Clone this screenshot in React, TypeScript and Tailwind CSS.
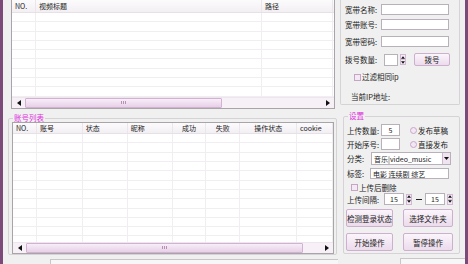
import React from 'react';

const font = { fontFamily: '"Noto Sans CJK SC", "Liberation Sans", sans-serif' };

function Arrow({ dir }: { dir: 'left' | 'right' | 'up' | 'down' }) {
  const pts = {
    left: '4,0 4,6 0,3',
    right: '0,0 0,6 4,3',
    up: '0,3 5,3 2.5,0',
    down: '0,0 5,0 2.5,3',
  }[dir];
  const w = dir === 'left' || dir === 'right' ? 4 : 5;
  const h = dir === 'left' || dir === 'right' ? 6 : 3;
  return (
    <svg width={w} height={h} viewBox={`0 0 ${w} ${h}`} className="block">
      <polygon points={pts} fill="#111" />
    </svg>
  );
}

function HScroll({ thumb }: { thumb: number }) {
  return (
    <div className="h-[11px] flex items-center bg-[#f7f1f7] border-t border-[#ede6ed]">
      <div className="w-[13px] flex justify-center"><Arrow dir="left" /></div>
      <div
        className="h-[10px] rounded-[1px] border border-[#d2b2d2] bg-gradient-to-b from-[#f8eef8] to-[#e7d0e7] flex items-center justify-center"
        style={{ width: thumb }}
      >
        <div className="flex gap-[1px]">
          <div className="w-[1px] h-[3px] bg-[#b890b8]" />
          <div className="w-[1px] h-[3px] bg-[#b890b8]" />
          <div className="w-[1px] h-[3px] bg-[#b890b8]" />
        </div>
      </div>
      <div className="flex-1" />
      <div className="w-[12px] flex justify-center"><Arrow dir="right" /></div>
    </div>
  );
}

type Col = { title: string; w: number; align?: 'left' | 'center' };

function Grid({ cols, headH, rows }: { cols: Col[]; headH: number; rows: number }) {
  return (
    <div className="flex-1 flex flex-col overflow-hidden">
      <div className="flex bg-gradient-to-b from-[#fcfbfc] to-[#f3eff3] border-b border-[#e6e1e6]" style={{ height: headH }}>
        {cols.map((c, i) => (
          <div
            key={i}
            className={`flex items-center text-[7px] text-[#222] border-r border-[#ebe6eb] ${c.align === 'center' ? 'justify-center' : 'pl-[3px]'}`}
            style={{ width: c.w }}
          >
            {c.title}
          </div>
        ))}
        <div className="flex-1" />
      </div>
      {Array.from({ length: rows }).map((_, r) => (
        <div key={r} className="flex h-[9.3px] border-b border-[#f1eef1] shrink-0">
          {cols.map((c, i) => (
            <div key={i} className="border-r border-[#f1eef1]" style={{ width: c.w }} />
          ))}
        </div>
      ))}
    </div>
  );
}

function Input({ w, h = 11, text, center }: { w: number; h?: number; text?: string; center?: boolean }) {
  return (
    <div
      className={`bg-white border border-[#b9b1b9] flex items-center text-[7px] text-[#222] ${center ? 'justify-center' : 'pl-[2px]'}`}
      style={{ width: w, height: h }}
    >
      {text}
    </div>
  );
}

function Spinner() {
  return (
    <div className="w-[6px] h-[11px] flex flex-col border border-[#d0b8d0] bg-[#f4e9f4]">
      <div className="flex-1 flex items-center justify-center border-b border-[#d9c6d9]"><Arrow dir="up" /></div>
      <div className="flex-1 flex items-center justify-center"><Arrow dir="down" /></div>
    </div>
  );
}

function Btn({ w, h, label }: { w: number; h: number; label: string }) {
  return (
    <div
      className="rounded-[2px] border border-[#cdb0cd] bg-gradient-to-b from-[#fbf5fb] to-[#ecdbec] flex items-center justify-center text-[7.5px] text-[#222]"
      style={{ width: w, height: h }}
    >
      {label}
    </div>
  );
}

function Check({ label }: { label: string }) {
  return (
    <div className="flex items-center gap-[1px] text-[7.5px] text-[#222]">
      <div className="w-[7px] h-[7px] border border-[#c4a6c4] bg-[#f4e8f4]" />
      <span>{label}</span>
    </div>
  );
}

function Radio({ label }: { label: string }) {
  return (
    <div className="flex items-center gap-[1px] text-[7.5px] text-[#222]">
      <div className="w-[7px] h-[7px] rounded-full border border-[#c9a6c9] bg-[#f3e7f3]" />
      <span>{label}</span>
    </div>
  );
}

const topCols: Col[] = [
  { title: 'NO.', w: 24 },
  { title: '视频标题', w: 226 },
  { title: '路径', w: 71 },
];

const accCols: Col[] = [
  { title: 'NO.', w: 24 },
  { title: '账号', w: 46 },
  { title: '状态', w: 45 },
  { title: '昵称', w: 45 },
  { title: '成功', w: 34, align: 'center' },
  { title: '失败', w: 34, align: 'center' },
  { title: '操作状态', w: 57, align: 'center' },
  { title: 'cookie', w: 36 },
];

export default function App() {
  return (
    <div className="w-[468px] h-[264px] flex bg-[#f0f0f0] overflow-hidden text-[#222]" style={font}>
      <div className="w-[3px] bg-[#7b4a79]" />

      {/* left column */}
      <div className="w-[335px] flex flex-col">
        <div className="ml-[8px] w-[324px] h-[109px] bg-white border-x border-b border-[#a8a4a8] flex flex-col">
          <Grid cols={topCols} headH={13} rows={9} />
          <HScroll thumb={197} />
        </div>

        <div className="relative ml-[5px] mt-[9px] w-[329px] h-[140px] border border-[#d6d3d6] rounded-[2px]">
          <span className="absolute left-[4px] top-[-6px] px-[1px] bg-[#f0f0f0] text-[7.5px] leading-[9px] text-[#dc2fdc]">账号列表</span>
          <div className="ml-[3px] mt-[3px] w-[322px] h-[132px] bg-white border border-[#a8a4a8] flex flex-col">
            <Grid cols={accCols} headH={14} rows={12} />
            <HScroll thumb={277} />
          </div>
        </div>

        <div className="ml-[47px] mt-[4px] h-[6px] border-t border-l border-[#c9c6c9] bg-[#f7f7f7]" />
      </div>

      {/* right column */}
      <div className="w-[127px] flex flex-col">
        <div className="ml-[2px] w-[120px] h-[107px] border-x border-b border-[#d6d3d6] rounded-b-[2px] flex flex-col text-[7.5px]">
          <div className="flex items-center mt-[4px] h-[11px] pl-[4px]">
            <span className="w-[36px]">宽带名称:</span>
            <Input w={68} />
          </div>
          <div className="flex items-center mt-[4px] h-[11px] pl-[4px]">
            <span className="w-[36px]">宽带账号:</span>
            <Input w={68} />
          </div>
          <div className="flex items-center mt-[6px] h-[11px] pl-[4px]">
            <span className="w-[36px]">宽带密码:</span>
            <Input w={68} />
          </div>
          <div className="flex items-center mt-[6px] h-[13px] pl-[4px]">
            <span className="w-[39px]">拨号数量:</span>
            <Input w={14} h={12} />
            <div className="ml-[2px]"><Spinner /></div>
            <div className="ml-[8px]"><Btn w={36} h={13} label="拨号" /></div>
          </div>
          <div className="flex items-center mt-[7px] h-[8px] pl-[13px]">
            <Check label="过滤相同ip" />
          </div>
          <div className="flex items-center mt-[11px] h-[9px] pl-[10px]">
            <span>当前IP地址:</span>
          </div>
        </div>

        <div className="relative ml-[5px] mt-[11px] w-[117px] h-[140px] border border-[#d6d3d6] rounded-[2px] flex flex-col text-[7.5px]">
          <span className="absolute left-[4px] top-[-6px] px-[1px] bg-[#f0f0f0] leading-[9px] text-[#dc2fdc]">设置</span>
          <div className="flex items-center mt-[7px] h-[12px] pl-[3px]">
            <span className="w-[34px]">上传数量:</span>
            <Input w={19} h={12} text="5" center />
            <div className="ml-[10px]"><Radio label="发布草稿" /></div>
          </div>
          <div className="flex items-center mt-[2px] h-[12px] pl-[3px]">
            <span className="w-[34px]">开始序号:</span>
            <Input w={19} h={12} />
            <div className="ml-[10px]"><Radio label="直接发布" /></div>
          </div>
          <div className="flex items-center mt-[2px] h-[13px] pl-[3px]">
            <span className="w-[24px]">分类:</span>
            <div className="w-[80px] h-[13px] bg-white border border-[#b9b1b9] flex items-center text-[7px]">
              <span className="flex-1 pl-[2px]">音乐|video_music</span>
              <div className="w-[8px] h-full border-l border-[#d0b8d0] bg-[#f1e4f1] flex items-center justify-center">
                <Arrow dir="down" />
              </div>
            </div>
          </div>
          <div className="flex items-center mt-[3px] h-[11px] pl-[3px]">
            <span className="w-[23px]">标签:</span>
            <Input w={79} text="电影 连续剧 综艺" />
          </div>
          <div className="flex items-center mt-[4px] h-[8px] pl-[7px]">
            <Check label="上传后删除" />
          </div>
          <div className="flex items-center mt-[2px] h-[12px] pl-[3px]">
            <span className="w-[37px]">上传间隔:</span>
            <Input w={20} h={12} text="15" center />
            <div className="ml-[2px]"><Spinner /></div>
            <span className="ml-[4px] w-[6px] h-[1px] bg-[#222]" />
            <div className="ml-[3px]"><Input w={20} h={12} text="15" center /></div>
            <div className="ml-[2px]"><Spinner /></div>
          </div>
          <div className="flex items-center mt-[4px] h-[18px] pl-[2px]">
            <Btn w={47} h={18} label="检测登录状态" />
            <div className="ml-[10px]"><Btn w={50} h={18} label="选择文件夹" /></div>
          </div>
          <div className="flex items-center mt-[6px] h-[18px] pl-[2px]">
            <Btn w={47} h={18} label="开始操作" />
            <div className="ml-[10px]"><Btn w={50} h={18} label="暂停操作" /></div>
          </div>
        </div>

        <div className="ml-[62px] mt-[4px] h-[6px] border-t border-l border-[#c9c6c9] bg-[#f7f7f7]" />
      </div>

      <div className="w-[3px] bg-[#7b4a79]" />
    </div>
  );
}
